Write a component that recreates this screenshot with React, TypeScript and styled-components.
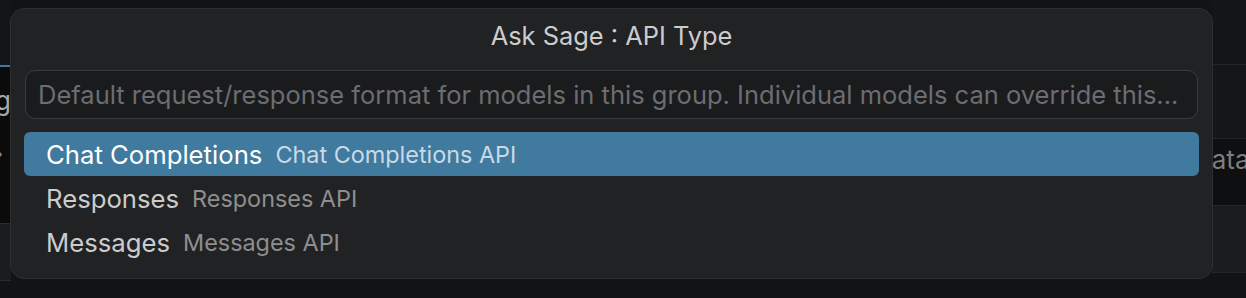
import styled, { createGlobalStyle } from "styled-components";

const GlobalStyle = createGlobalStyle`
  html, body {
    margin: 0;
    padding: 0;
    background: #121315;
  }
  #root {
    width: 1246px;
    height: 298px;
  }
`;

const Page = styled.div`
  position: relative;
  width: 1246px;
  height: 298px;
  overflow: hidden;
  font-family: "Inter", "Noto Sans", sans-serif;
  display: grid;
  grid-template-columns: 11px 1fr 34px;
  background: #121315;
`;

// ---- backdrop (the workbench behind the picker) ----

const LeftPane = styled.div`
  display: flex;
  flex-direction: column;
  overflow: hidden;
`;

const LeftTabs = styled.div`
  height: 65px;
  background: #141517;
  border-bottom: 2px solid #3c7aa6;
`;

const LeftEditor = styled.div`
  height: 138px;
  background: #0b0b0c;
  border-bottom: 1px solid #2a2b2d;
  display: flex;
  flex-direction: column;
  align-items: flex-end;
  padding-top: 18px;
  gap: 26px;
  color: #a9a9a9;
  font-size: 26px;
  white-space: nowrap;
`;

const Chevron = styled.span`
  margin-right: 8px;
  font-size: 20px;
  color: #8a8a8a;
`;

const LeftRow = styled.div`
  height: 56px;
  background: #1b1c1e;
  border-bottom: 1px solid #2a2b2d;
`;

const Middle = styled.div`
  background: #121315;
`;

const RightPane = styled.div`
  display: flex;
  flex-direction: column;
  overflow: hidden;
`;

const Band = styled.div<{ $h: number; $bg: string }>`
  height: ${({ $h }) => $h}px;
  flex: none;
  box-sizing: border-box;
  background: ${({ $bg }) => $bg};
  border-bottom: 1px solid #242527;
  display: flex;
  align-items: flex-start;
  padding-top: 5px;
  color: #7e7e7f;
  font-size: 26px;
  white-space: nowrap;
  overflow: hidden;
`;

const BandText = styled.span`
  margin-left: -19px;
`;

// ---- quick pick ----

const Picker = styled.div`
  position: absolute;
  top: 8px;
  left: 10px;
  width: 1203px;
  height: 271px;
  box-sizing: border-box;
  background: #212224;
  border: 1px solid #2d2e31;
  border-radius: 14px;
  padding: 0 13px;
  display: flex;
  flex-direction: column;
`;

const Title = styled.div`
  height: 53px;
  display: flex;
  align-items: center;
  justify-content: center;
  color: #cccccc;
  font-size: 25.4px;
`;

const InputBox = styled.div`
  margin: 8px 1px 0 1px;
  height: 49px;
  box-sizing: border-box;
  border: 1px solid #3a3b3e;
  border-radius: 10px;
  background: #1a1b1d;
  display: flex;
  align-items: center;
  padding: 0 18px 0 12px;
  overflow: hidden;
`;

const Placeholder = styled.span`
  color: #6c6d70;
  font-size: 25.5px;
  white-space: nowrap;
  overflow: hidden;
  text-overflow: ellipsis;
`;

const List = styled.div`
  margin-top: 13px;
  display: flex;
  flex-direction: column;
`;

const Row = styled.div<{ $selected?: boolean }>`
  height: 44px;
  border-radius: 6px;
  padding: 0 22px;
  display: flex;
  align-items: center;
  gap: 13px;
  white-space: nowrap;
  background: ${({ $selected }) => ($selected ? "#407a9f" : "transparent")};
`;

const Label = styled.span<{ $selected?: boolean }>`
  font-size: 25.7px;
  color: ${({ $selected }) => ($selected ? "#ffffff" : "#cccccc")};
`;

const Description = styled.span<{ $selected?: boolean }>`
  font-size: 23.4px;
  color: ${({ $selected }) => ($selected ? "#c9dae6" : "#8e8e8f")};
`;

const items = [
  { label: "Chat Completions", description: "Chat Completions API" },
  { label: "Responses", description: "Responses API" },
  { label: "Messages", description: "Messages API" },
];

export default function App() {
  return (
    <>
      <GlobalStyle />
      <Page>
        <LeftPane>
          <LeftTabs />
          <LeftEditor>
            <span>Setting</span>
            <Chevron>›</Chevron>
          </LeftEditor>
          <LeftRow />
        </LeftPane>
        <Middle />
        <RightPane>
          <Band $h={65} $bg="#141517" />
          <Band $h={74} $bg="#151618" />
          <Band $h={67} $bg="#0e0f10">
            <BandText>Data</BandText>
          </Band>
          <Band $h={67} $bg="#1b1c1e" />
        </RightPane>

        <Picker>
          <Title>Ask Sage : API Type</Title>
          <InputBox>
            <Placeholder>
              Default request/response format for models in this group.
              Individual models can override this...
            </Placeholder>
          </InputBox>
          <List>
            {items.map((item, i) => (
              <Row key={item.label} $selected={i === 0}>
                <Label $selected={i === 0}>{item.label}</Label>
                <Description $selected={i === 0}>
                  {item.description}
                </Description>
              </Row>
            ))}
          </List>
        </Picker>
      </Page>
    </>
  );
}
